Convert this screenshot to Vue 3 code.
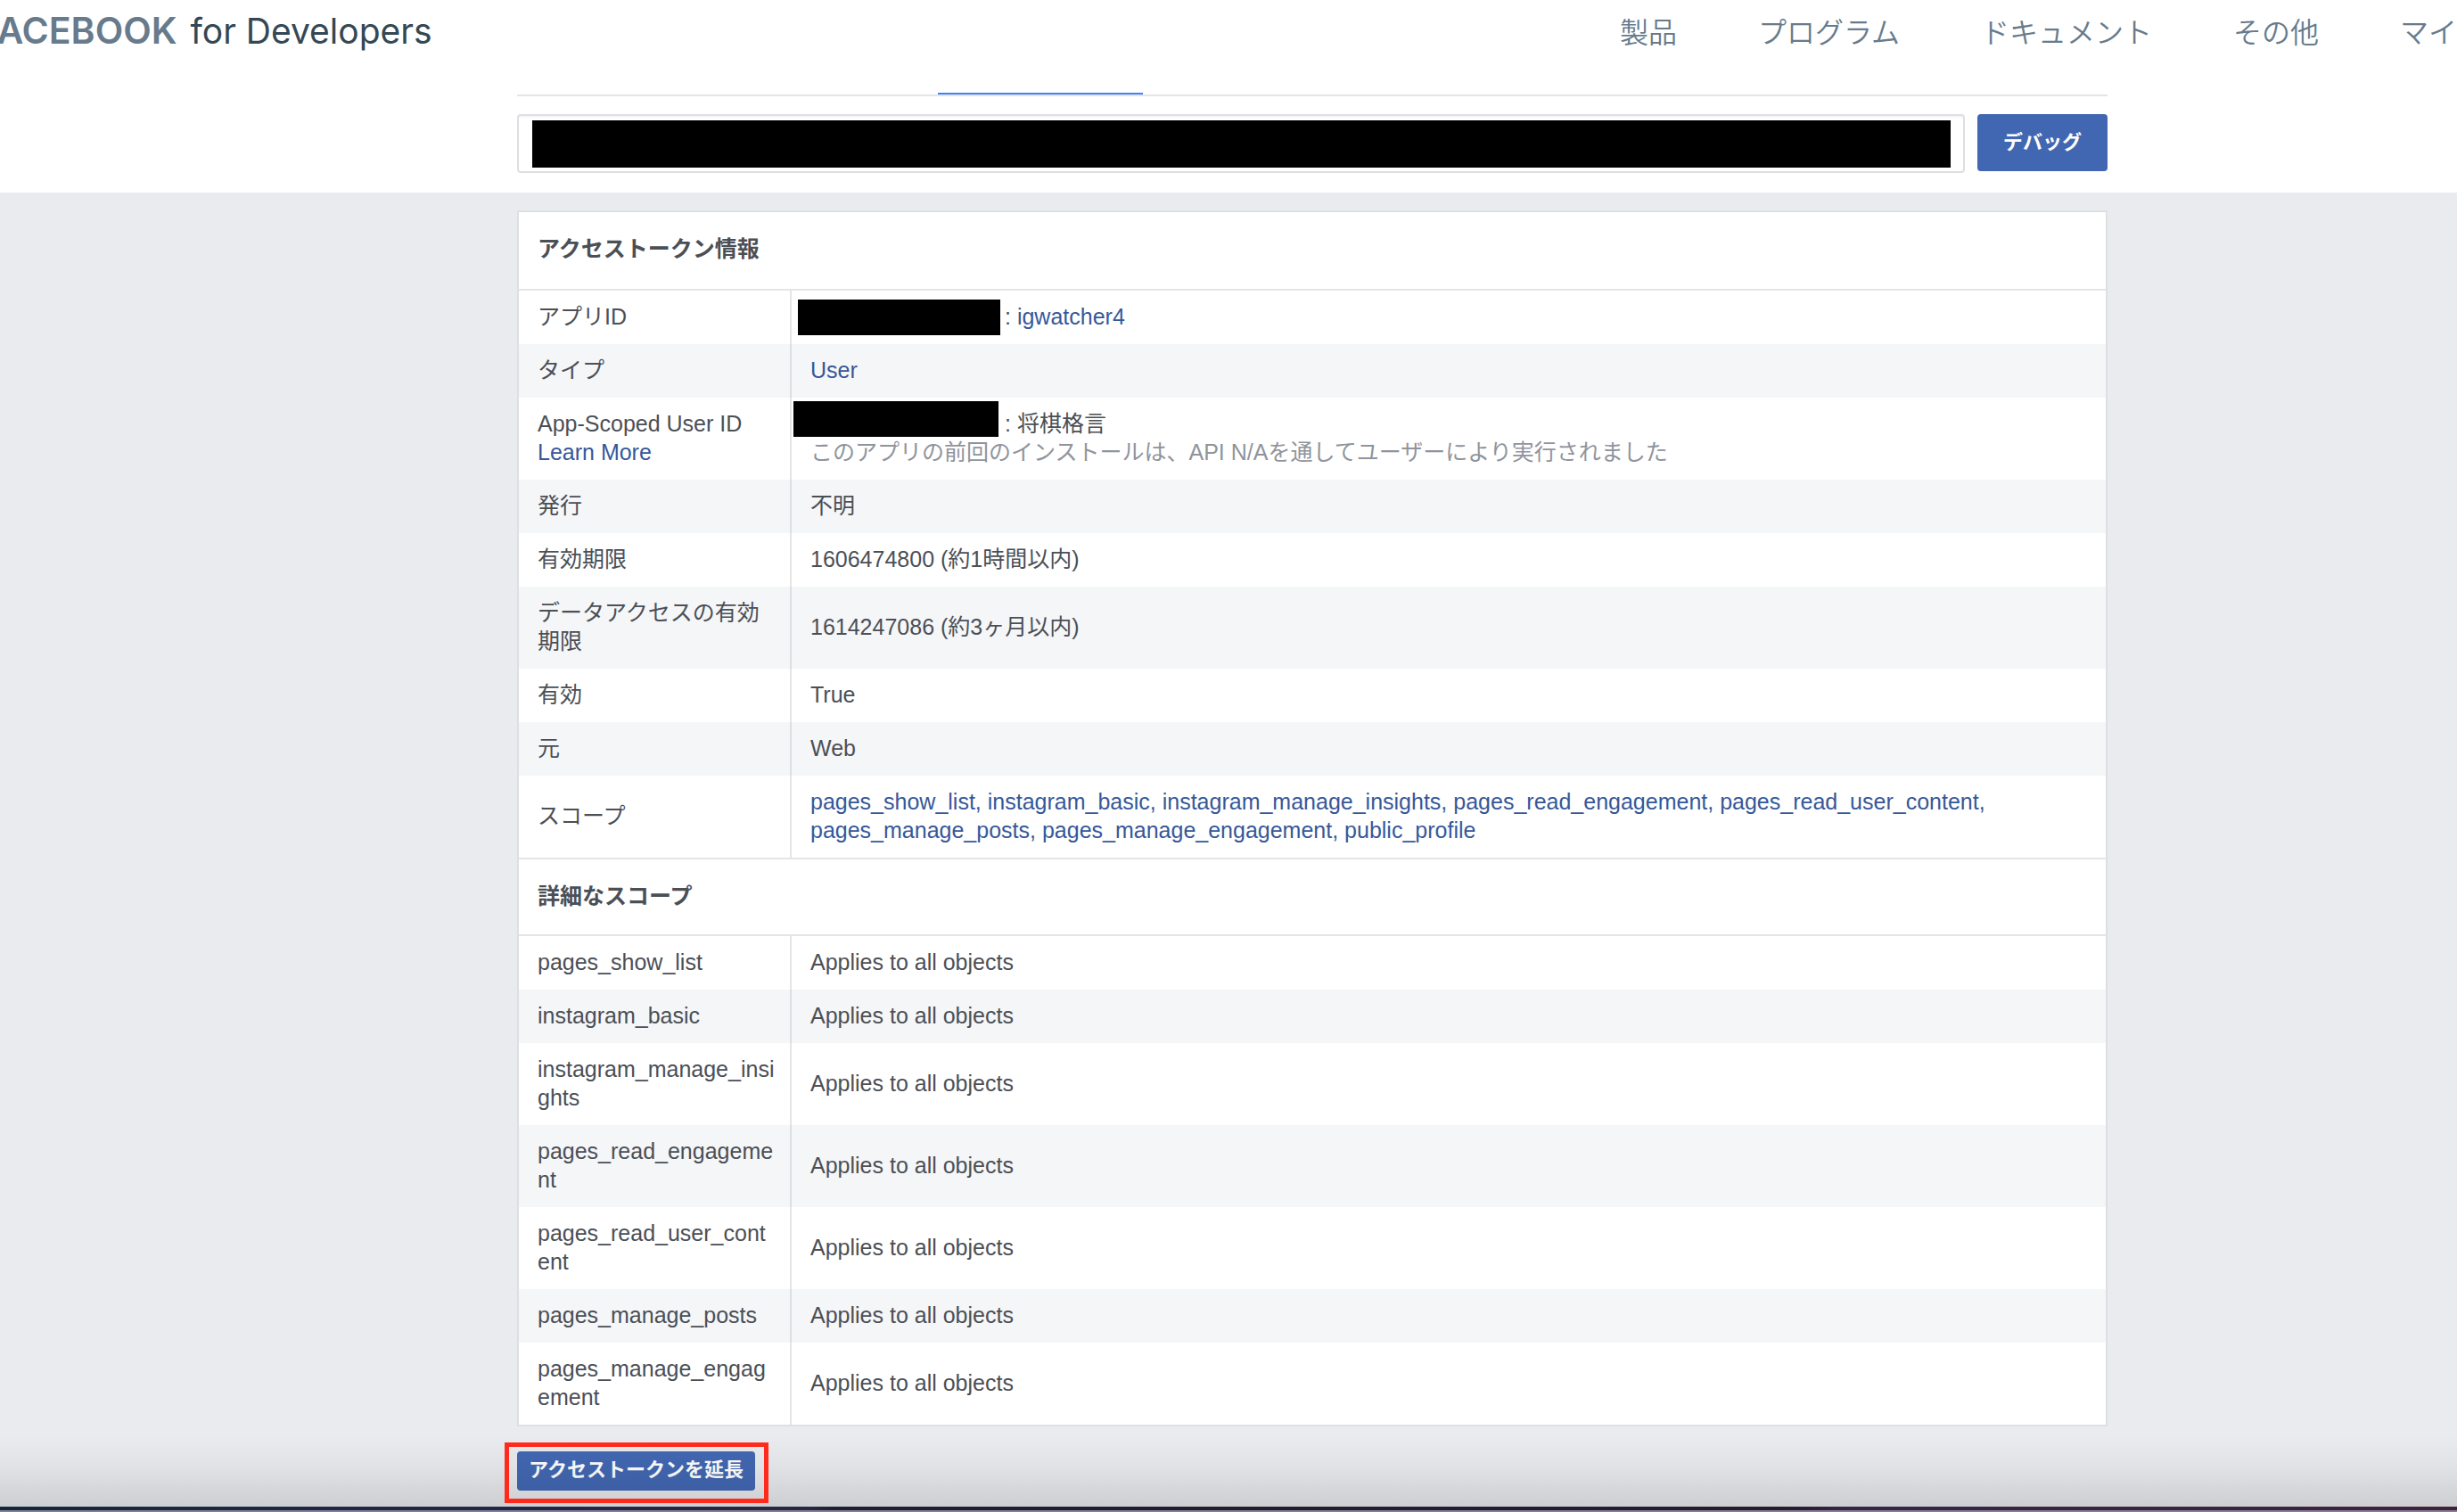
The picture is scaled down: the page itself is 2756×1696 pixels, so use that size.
<script setup>
const navItems = ['製品', 'プログラム', 'ドキュメント', 'その他', 'マイ']

const scopes = [
  'pages_show_list',
  'instagram_basic',
  'instagram_manage_insights',
  'pages_read_engagement',
  'pages_read_user_content',
  'pages_manage_posts',
  'pages_manage_engagement',
  'public_profile',
]

const granular = scopes.slice(0, 7)
</script>

<template>
  <div class="page">
    <header class="top">
      <div class="bar">
        <a class="brand" href="#"><span class="brand-name">FACEBOOK</span> for Developers</a>
        <nav class="nav">
          <a v-for="item in navItems" :key="item" href="#">{{ item }}</a>
        </nav>
      </div>
      <div class="tools">
        <div class="tabs"><span class="tab-active"></span></div>
        <form class="debug" @submit.prevent>
          <div class="token">
            <input type="text" aria-label="アクセストークン" />
            <span class="redact token-mask"></span>
          </div>
          <button type="submit" class="btn btn-debug">デバッグ</button>
        </form>
      </div>
    </header>

    <main class="main">
      <table class="info">
        <colgroup>
          <col class="col-label" />
          <col />
        </colgroup>
        <tbody>
          <tr class="head"><th colspan="2">アクセストークン情報</th></tr>
          <tr>
            <td>アプリID</td>
            <td><span class="masked"><span class="redact id-mask"></span></span>: <a href="#">igwatcher4</a></td>
          </tr>
          <tr class="alt"><td>タイプ</td><td><a href="#">User</a></td></tr>
          <tr>
            <td>App-Scoped User ID<br /><a href="#">Learn More</a></td>
            <td>
              <span class="masked"><span class="redact user-mask"></span></span>: 将棋格言
              <div class="note">このアプリの前回のインストールは、API N/Aを通してユーザーにより実行されました</div>
            </td>
          </tr>
          <tr class="alt"><td>発行</td><td>不明</td></tr>
          <tr><td>有効期限</td><td>1606474800 (約1時間以内)</td></tr>
          <tr class="alt"><td>データアクセスの有効期限</td><td>1614247086 (約3ヶ月以内)</td></tr>
          <tr><td>有効</td><td>True</td></tr>
          <tr class="alt"><td>元</td><td>Web</td></tr>
          <tr>
            <td>スコープ</td>
            <td>
              <template v-for="(scope, i) in scopes" :key="scope"><a href="#">{{ scope }}{{ i < scopes.length - 1 ? ',' : '' }}</a>{{ ' ' }}</template>
            </td>
          </tr>
        </tbody>
        <tbody>
          <tr class="head second"><th colspan="2">詳細なスコープ</th></tr>
          <tr v-for="(scope, i) in granular" :key="scope" :class="{ alt: i % 2 === 1 }">
            <td>{{ scope }}</td>
            <td>Applies to all objects</td>
          </tr>
        </tbody>
      </table>
      <div class="extend">
        <button type="button" class="btn btn-extend">アクセストークンを延長</button>
      </div>
    </main>
    <div class="edge"></div>
  </div>
</template>

<style>
body {
  margin: 0;
}
</style>

<style scoped>
.page {
  position: relative;
  display: flex;
  flex-direction: column;
  min-height: 100vh;
  overflow: hidden;
  background: #e9ebee;
  color: #4b4f56;
  font-family: "Liberation Sans", "Noto Sans CJK JP", sans-serif;
  font-size: 25px;
  line-height: 32px;
}

a {
  color: #365899;
  text-decoration: none;
}

.top {
  background: #fff;
  padding-bottom: 22px;
}

.bar {
  display: flex;
  justify-content: space-between;
  height: 72px;
}

.brand {
  margin-left: -24px;
  color: #344854;
  font: 400 39px/68px Inter, sans-serif;
  white-space: nowrap;
}

.brand-name {
  margin-right: 4px;
  color: #677b8c;
  font-size: 41px;
  font-weight: 600;
}

.nav {
  display: flex;
  gap: 91px;
}

.nav a {
  color: #677b8c;
  font-size: 32px;
  font-weight: 350;
  line-height: 74px;
  white-space: nowrap;
}

.tools,
.main {
  padding: 0 392px 0 580px;
}

.tabs {
  display: flex;
  height: 34px;
  border-bottom: 2px solid #e5e5e5;
}

.tab-active {
  width: 230px;
  margin-left: 472px;
  border-bottom: 2px solid #4080ff;
}

.debug {
  display: flex;
  gap: 14px;
  padding-top: 20px;
}

.token {
  position: relative;
  flex: 1;
}

.token input {
  box-sizing: border-box;
  display: block;
  width: 100%;
  height: 66px;
  padding: 0 16px;
  border: 2px solid #dddfe2;
  border-radius: 4px;
  box-shadow: inset 0 2px 0 #f5f6f7;
  background: #fff;
  font: inherit;
}

.redact {
  position: absolute;
  background: #000;
}

.token-mask {
  inset: 7px 16px 6px 17px;
}

.btn {
  border: 0;
  border-radius: 4px;
  background: #4267b2;
  color: #fff;
  font: 700 22px/42px "Liberation Sans", "Noto Sans CJK JP", sans-serif;
  white-space: nowrap;
}

.btn-debug {
  width: 146px;
  height: 64px;
  padding: 0;
}

.main {
  flex: 1;
  padding-top: 20px;
}

.info {
  width: 100%;
  table-layout: fixed;
  border: 2px solid #dddfe2;
  border-spacing: 0;
  background: #fff;
}

.col-label {
  width: 304px;
}

td {
  padding: 13px 15px 15px 21px;
  overflow-wrap: anywhere;
}

td + td {
  border-left: 2px solid #e5e5e5;
}

.alt td {
  background: #f5f6f7;
}

.alt td + td {
  border-color: #dcdee1;
}

th {
  padding: 25px 21px 29px;
  border-bottom: 2px solid #e5e5e5;
  font-weight: 700;
  text-align: left;
}

.second th {
  border-top: 2px solid #e5e5e5;
  padding-bottom: 27px;
}

.masked {
  position: relative;
  display: inline-block;
  width: 218px;
  height: 20px;
}

.id-mask {
  inset: -8px 5px -12px -14px;
}

.user-mask {
  inset: -14px 7px -6px -19px;
}

.note {
  color: #90949c;
}

.extend {
  position: relative;
  width: max-content;
  margin-top: 28px;
}

.extend::after {
  content: "";
  position: absolute;
  z-index: 2;
  inset: -10px -15px -14px -14px;
  border: 5px solid #ff2a1c;
  pointer-events: none;
}

.btn-extend {
  display: block;
  height: 44px;
  padding: 0 13px 2px;
}

.edge {
  position: relative;
  height: 4px;
  border-bottom: 2px solid #84808f;
  background: linear-gradient(90deg, #10263f, #1d2748 12%, #26264a 33%, #1c1e33 34%, #271a33 73%, #35244a 75%, #41203f);
}

.edge::before {
  content: "";
  position: absolute;
  inset: -80px 0 4px;
  background: linear-gradient(transparent, rgba(0, 0, 0, 0.04) 45%, rgba(0, 0, 0, 0.12));
  pointer-events: none;
}
</style>
